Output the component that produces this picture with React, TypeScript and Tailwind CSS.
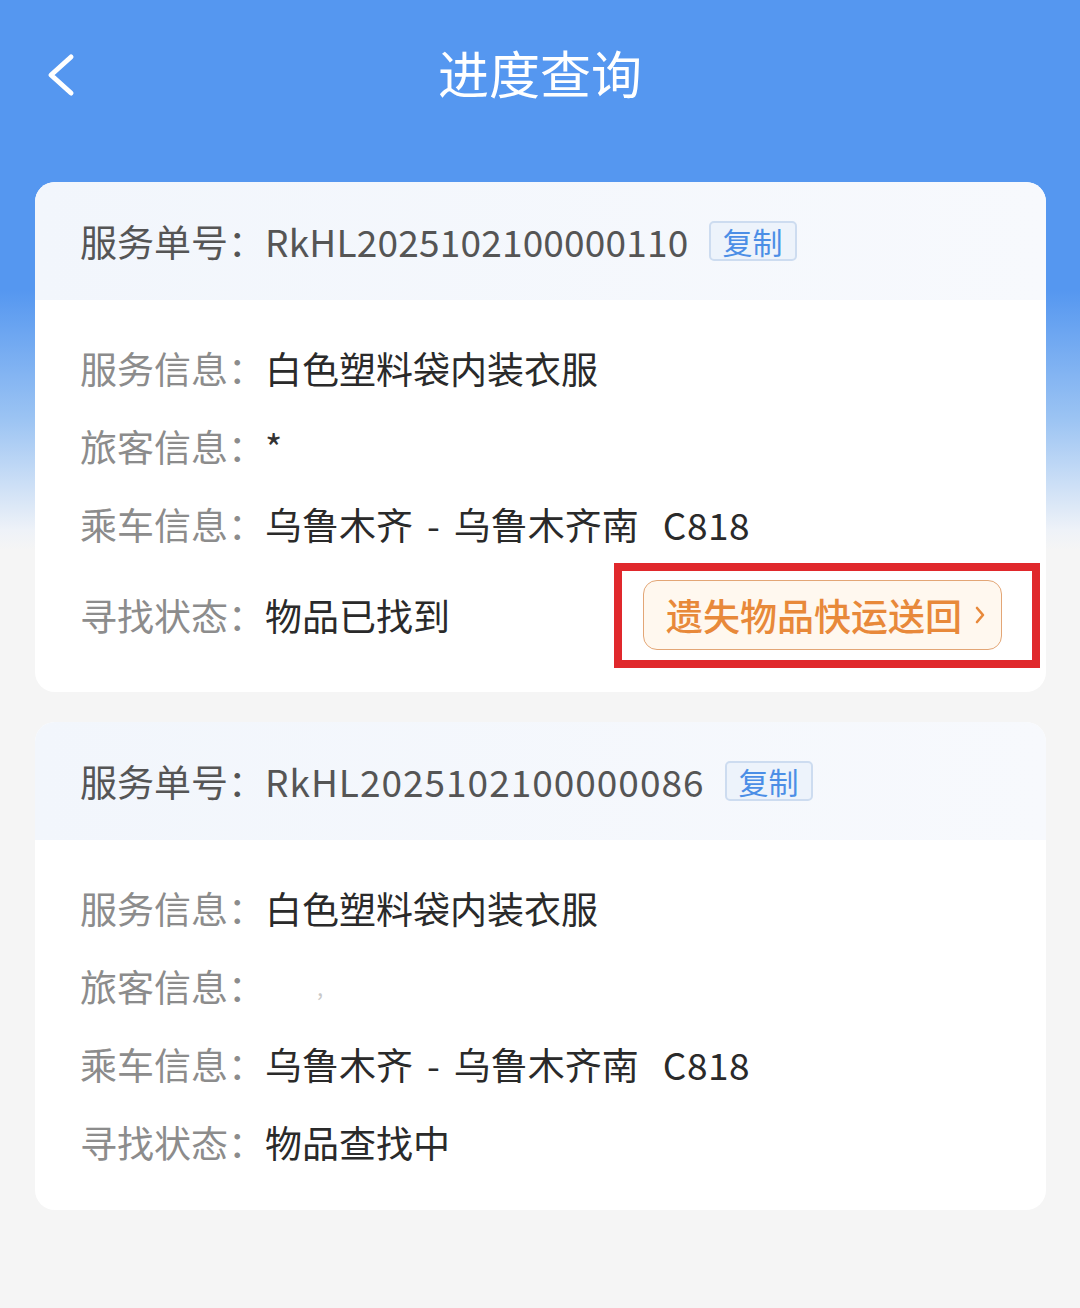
import { ReactNode } from "react";

type Ticket = {
  serviceNo: string;
  noTracking: string;
  item: string;
  passenger: ReactNode;
  status: string;
  canShip?: boolean;
};

const tickets: Ticket[] = [
  {
    serviceNo: "RkHL2025102100000110",
    noTracking: "tracking-[0.2px]",
    item: "白色塑料袋内装衣服",
    passenger: <span className="text-[#333]">*</span>,
    status: "物品已找到",
    canShip: true
  },
  {
    serviceNo: "RkHL2025102100000086",
    noTracking: "tracking-[1px]",
    item: "白色塑料袋内装衣服",
    passenger: <span className="ml-[52px] text-[22px] text-[#c8c8c8]">,</span>,
    status: "物品查找中"
  }
];

function BackIcon() {
  return (
    <svg aria-hidden className="h-[44px] w-[32px]" viewBox="0 0 32 44" fill="none">
      <path d="M25 4 L5 22 L25 40" stroke="white" strokeWidth="5" strokeLinecap="round" strokeLinejoin="round" />
    </svg>
  );
}

function InfoRow({ label, children, tall }: { label: string; children: ReactNode; tall?: boolean }) {
  return (
    <div className={tall ? "flex h-[105px] items-center" : "flex h-[78px] items-center"}>
      <span className="shrink-0 text-[#8c8c8c]">{label}：</span>
      {children}
    </div>
  );
}

function Trip() {
  return (
    <span className="flex items-center text-[#2a2a2a]">
      乌鲁木齐
      <span className="mx-[14px]">-</span>
      乌鲁木齐南
      <span className="ml-[24px] tracking-[0.5px]">C818</span>
    </span>
  );
}

function TicketCard({ ticket }: { ticket: Ticket }) {
  return (
    <section className="overflow-hidden rounded-[20px] bg-white">
      <div className="flex h-[118px] items-center bg-[linear-gradient(90deg,#f2f6fc,#f7f9fd)] pl-[45px] text-[#555]">
        <span>服务单号：</span>
        <span className={ticket.noTracking}>{ticket.serviceNo}</span>
        <button
          className="ml-[20px] flex h-[40px] w-[88px] items-center justify-center rounded-[5px] border-2 border-[#cddcf0] bg-[#edf3fb] text-[30px] leading-none text-[#4b8ee6]"
          type="button"
        >
          复制
        </button>
      </div>
      <div className={ticket.canShip ? "pb-[24px] pl-[45px] pr-[6px] pt-[29px]" : "pb-[29px] pl-[45px] pr-[6px] pt-[29px]"}>
        <InfoRow label="服务信息">
          <span className="text-[#2a2a2a]">{ticket.item}</span>
        </InfoRow>
        <InfoRow label="旅客信息">{ticket.passenger}</InfoRow>
        <InfoRow label="乘车信息">
          <Trip />
        </InfoRow>
        <InfoRow label="寻找状态" tall={ticket.canShip}>
          <span className="text-[#2a2a2a]">{ticket.status}</span>
          {ticket.canShip ? (
            <div className="ml-auto flex h-[105px] w-[426px] items-start border-[8px] border-[#e0282c] pl-[21px] pt-[9px]">
              <button
                className="flex h-[70px] w-[359px] items-center rounded-[14px] border-[1.5px] border-[#e3a676] bg-[#fff8ef] pl-[22px] text-[37px] font-medium leading-none text-[#e8893a]"
                type="button"
              >
                遗失物品快运送回
                <svg aria-hidden className="ml-[12px] h-[20px] w-[12px]" viewBox="0 0 12 20" fill="none">
                  <path d="M3 3 L9 10 L3 17" stroke="#e8893a" strokeWidth="2.6" strokeLinecap="round" strokeLinejoin="round" />
                </svg>
              </button>
            </div>
          ) : null}
        </InfoRow>
      </div>
    </section>
  );
}

export default function App() {
  return (
    <div
      className="min-h-[1308px] w-full bg-[linear-gradient(180deg,#5597f0_0px,#5597f0_290px,#9cc4f3_420px,#eef2f8_530px,#f5f5f5_550px,#f5f5f5_100%)] text-[37px] leading-none"
      style={{ fontFamily: '"Noto Sans CJK SC", "Noto Sans", sans-serif' }}
    >
      <header className="relative flex h-[182px] items-start justify-center pt-[42px]">
        <div className="absolute left-[46px] top-[53px]">
          <BackIcon />
        </div>
        <h1 className="text-[51px] font-normal leading-[60px] text-white">进度查询</h1>
      </header>
      <main className="flex flex-col gap-[30px] pl-[35px] pr-[34px]">
        {tickets.map((ticket) => (
          <TicketCard key={ticket.serviceNo} ticket={ticket} />
        ))}
      </main>
    </div>
  );
}
